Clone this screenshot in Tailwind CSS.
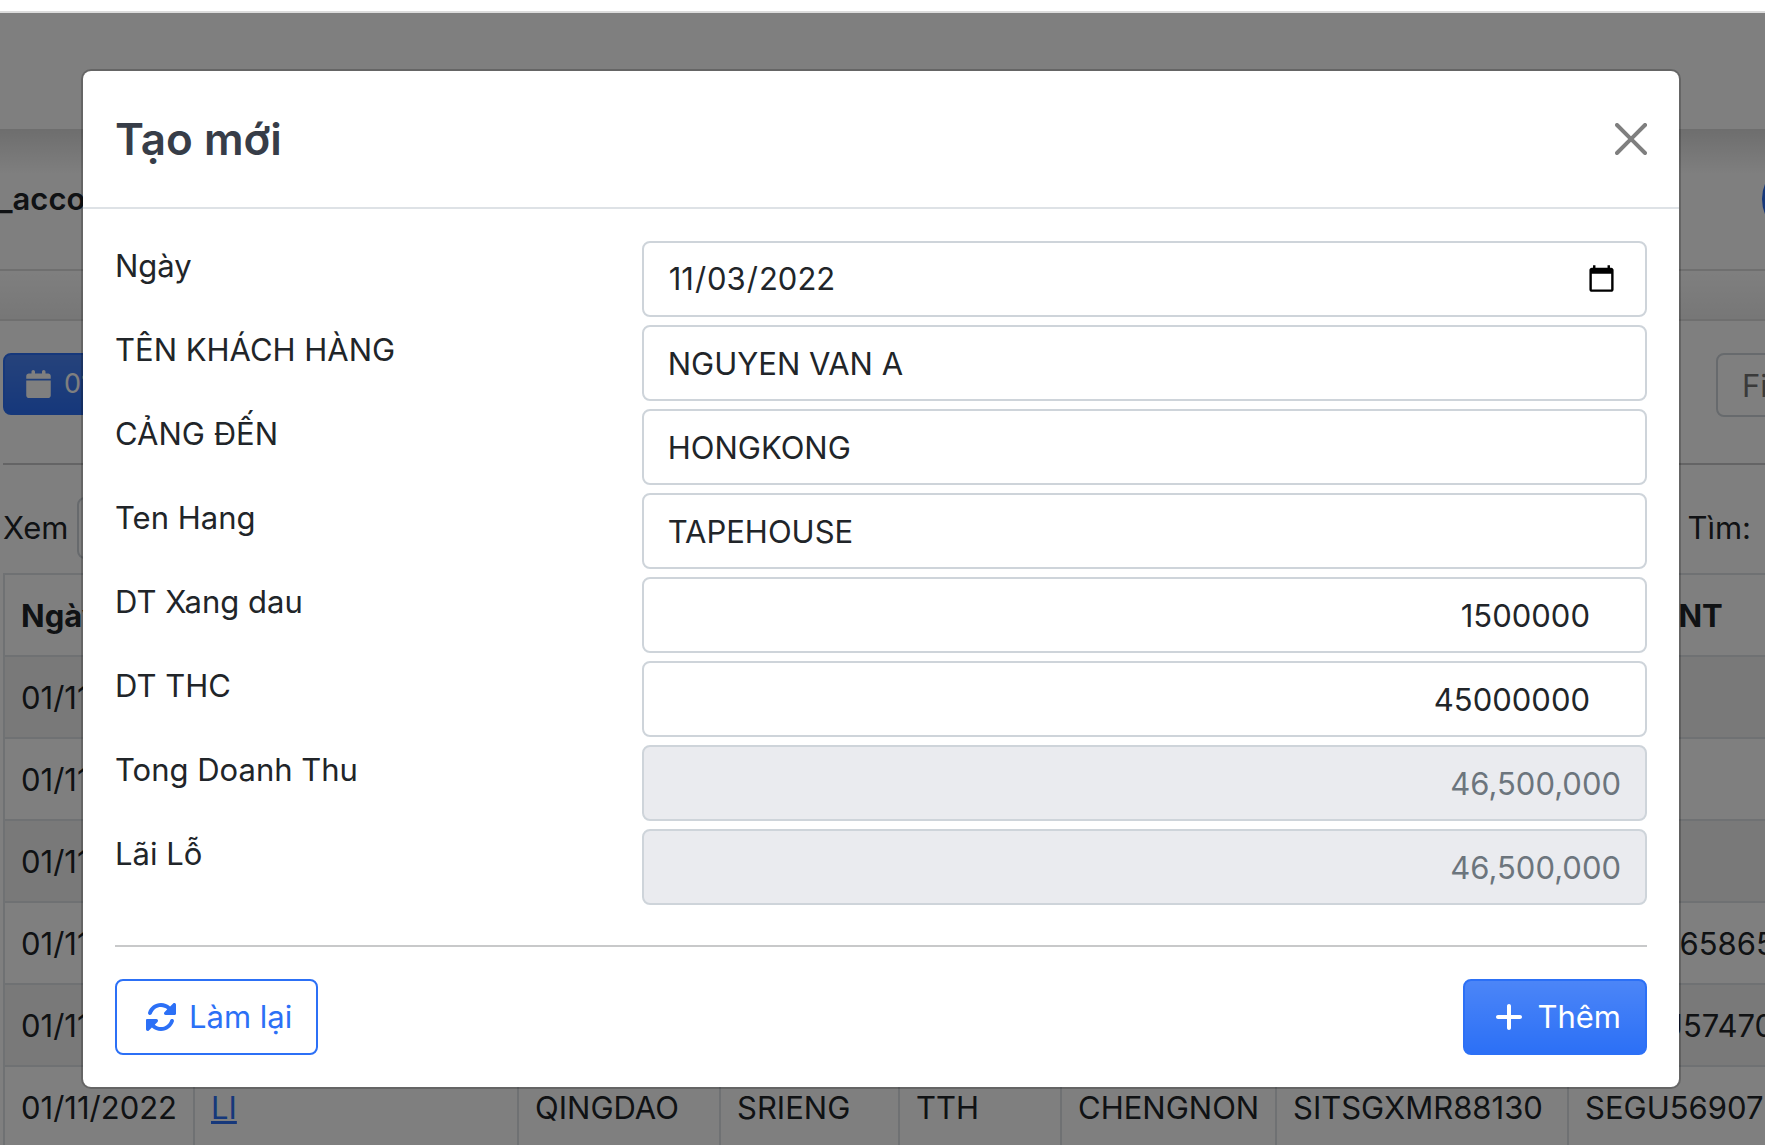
<!DOCTYPE html>
<html lang="vi">
<head>
<meta charset="utf-8">
<title>Tạo mới</title>
<script src="https://cdn.jsdelivr.net/npm/@tailwindcss/browser@4"></script>
</head>
<body class="relative h-screen overflow-hidden bg-white font-['Inter','Liberation_Sans',sans-serif] text-[31px] leading-[48px] text-[#212529]">

  <!-- Page behind the dialog -->
  <div class="h-[11px]"></div>
  <div class="h-[2px] bg-[#dcdcdc]"></div>
  <div class="h-[116px] bg-white"></div>

  <header class="flex h-[142px] items-center justify-between overflow-hidden border-b-2 border-[#dfdfdf] bg-linear-to-b from-[#dcdcdc] to-white to-[46px]">
    <div class="-ml-0.5 font-semibold">_account</div>
    <button class="-mr-[75px] size-[78px] shrink-0 rounded-full bg-[#2c70f6]" aria-label="Menu"></button>
  </header>
  <div class="h-12 bg-linear-to-b from-white to-[#eeeeee]"></div>

  <main class="w-full overflow-hidden border-t-2 border-[#dfdfdf] pl-[3px]">
    <div class="flex items-start justify-between pt-8">
      <button class="flex items-center rounded-lg border-2 border-[#2c70f6] bg-[#2c70f6] bg-linear-to-b from-white/15 to-white/0 px-4 py-2 text-[27px] leading-[42px] text-white">
        <svg class="mr-2 h-7 w-[35px]" viewBox="0 0 448 512" fill="currentColor"><path d="M96 32V64H48C21.500 64 0 85.500 0 112v48H448V112c0-26.500-21.500-48-48-48H352V32c0-17.700-14.300-32-32-32s-32 14.300-32 32V64H160V32c0-17.700-14.300-32-32-32S96 14.300 96 32zM448 192H0V464c0 26.500 21.500 48 48 48H400c26.500 0 48-21.500 48-48V192z"/></svg>
        01/11/2022
      </button>
      <input type="text" aria-label="Filter" placeholder="Filter" class="-mr-[200px] h-16 w-[249px] rounded-lg border-2 border-[#ced4da] px-6 placeholder:text-[#757575]">
    </div>
    <hr class="mt-[46px] border-t-2 border-[#c8c9ca]">
    <div class="flex items-center justify-between pt-8">
      <label class="flex items-center gap-2">Xem
        <select class="h-[62px] w-32 appearance-none rounded-lg border-2 border-[#ced4da] px-4"><option>50</option></select>
      </label>
      <label class="pr-[14px]">Tìm:</label>
    </div>
    <table class="mt-[14px] w-[2060px] table-fixed border-collapse [&_td]:border-2 [&_td]:border-[#dee2e6] [&_td]:px-4 [&_td]:pt-[17px] [&_td]:pb-[15px] [&_td]:whitespace-nowrap [&_th]:border-2 [&_th]:border-[#dee2e6] [&_th]:px-4 [&_th]:pt-[17px] [&_th]:pb-[15px] [&_th]:text-left [&_th]:font-bold [&_th]:whitespace-nowrap [&_tbody_tr:nth-child(odd)]:bg-[#f2f2f2]">
      <colgroup><col class="w-[190px]"><col class="w-[324px]"><col class="w-[202px]"><col class="w-[179px]"><col class="w-[162px]"><col class="w-[215px]"><col class="w-[292px]"><col></colgroup>
      <thead><tr><th>Ngày</th><th></th><th></th><th></th><th></th><th></th><th></th><th>Số CONT</th></tr></thead>
      <tbody>
        <tr><td>01/11/2022</td><td></td><td></td><td></td><td></td><td></td><td></td><td></td></tr>
        <tr><td>01/11/2022</td><td></td><td></td><td></td><td></td><td></td><td></td><td></td></tr>
        <tr><td>01/11/2022</td><td></td><td></td><td></td><td></td><td></td><td></td><td></td></tr>
        <tr><td>01/11/2022</td><td></td><td></td><td></td><td></td><td></td><td></td><td>CMAU65865</td></tr>
        <tr><td>01/11/2022</td><td></td><td></td><td></td><td></td><td></td><td></td><td>GMOU57470</td></tr>
        <tr><td>01/11/2022</td><td><a href="#" class="text-[#2c70f6] underline">LI</a></td><td>QINGDAO</td><td>SRIENG</td><td>TTH</td><td>CHENGNON</td><td>SITSGXMR88130</td><td>SEGU56907</td></tr>
      </tbody>
    </table>
  </main>

  <!-- Dialog -->
  <div class="absolute inset-x-0 top-[13px] bottom-0 bg-black/50 pt-14 pr-[84px] pl-[81px]">
    <section role="dialog" aria-labelledby="dialog-title" class="rounded-[10px] border-2 border-black/20 bg-white bg-clip-padding">
      <div class="flex items-center justify-between border-b-2 border-[#dee2e6] p-8">
        <h1 id="dialog-title" class="text-[44px] leading-[72px] font-semibold text-[#373d48]">Tạo mới</h1>
        <button aria-label="Đóng" class="text-black/50">
          <svg class="size-8" viewBox="0 0 16 16" fill="currentColor"><path d="M.293.293a1 1 0 0 1 1.414 0L8 6.586 14.293.293a1 1 0 1 1 1.414 1.414L9.414 8l6.293 6.293a1 1 0 0 1-1.414 1.414L8 9.414l-6.293 6.293a1 1 0 0 1-1.414-1.414L6.586 8 .293 1.707a1 1 0 0 1 0-1.414z"/></svg>
        </button>
      </div>
      <form class="p-8">
        <div class="grid grid-cols-3 gap-x-12 gap-y-2 [&_input]:col-span-2 [&_input]:h-[76px] [&_input]:w-full [&_input]:rounded-lg [&_input]:border-2 [&_input]:border-[#ced4da] [&_input]:px-6 [&_label]:pt-px">
          <label for="f1">Ngày</label>
          <input id="f1" type="date" value="2022-11-03" class="!pr-[26px]">
          <label for="f2">TÊN KHÁCH HÀNG</label>
          <input id="f2" type="text" value="NGUYEN VAN A">
          <label for="f3">CẢNG ĐẾN</label>
          <input id="f3" type="text" value="HONGKONG">
          <label for="f4">Ten Hang</label>
          <input id="f4" type="text" value="TAPEHOUSE">
          <label for="f5">DT Xang dau</label>
          <input id="f5" type="number" value="1500000" class="[appearance:textfield] !pr-10 text-right">
          <label for="f6">DT THC</label>
          <input id="f6" type="number" value="45000000" class="[appearance:textfield] !pr-10 text-right">
          <label for="f7">Tong Doanh Thu</label>
          <input id="f7" type="text" value="46,500,000" disabled class="bg-[#eaebef] text-right text-[#6c757d]">
          <label for="f8">Lãi Lỗ</label>
          <input id="f8" type="text" value="46,500,000" disabled class="bg-[#eaebef] text-right text-[#6c757d]">
        </div>
        <hr class="mt-10 mb-8 border-t-2 border-[#c8c9ca]">
        <div class="flex items-center justify-between">
          <button type="reset" class="flex items-center gap-2 rounded-lg border-2 border-[#2c70f6] px-6 py-3 text-[#2c70f6]">
            <svg class="h-8 w-10" viewBox="0 0 512 512" fill="currentColor"><path d="M449.900 39.960l-48.500 48.530C362.500 53.190 311.400 32 256 32C161.500 32 78.590 92.340 49.580 182.200c-5.438 16.810 3.797 34.880 20.610 40.280c16.970 5.500 34.860-3.812 40.300-20.590C130.900 138.500 189.400 96 256 96c37.960 0 73 14.180 100.200 37.800L311.100 178C295.100 194.800 306.800 223.400 330.400 224h146.900C487.700 223.700 496 215.300 496 204.900V59.040C496 34.990 466.900 22.950 449.900 39.960zM441.800 289.600c-16.940-5.438-34.880 3.812-40.300 20.590C381.100 373.500 322.600 416 256 416c-37.960 0-73-14.180-100.200-37.800L200 334C216.900 317.200 205.200 288.600 181.600 288H34.660C24.320 288.300 16 296.700 16 307.100v145.900c0 24.040 29.070 36.080 46.070 19.070l48.500-48.530C149.500 458.800 200.600 480 255.100 480c94.450 0 177.400-60.340 206.400-150.200C467.900 313 458.600 294.100 441.800 289.600z"/></svg>
            Làm lại
          </button>
          <button type="submit" class="flex items-center gap-2 rounded-lg border-2 border-[#2c70f6] bg-[#2c70f6] bg-linear-to-b from-white/15 to-white/0 px-6 py-3 text-white">
            <svg class="h-8 w-10" viewBox="0 0 448 512" fill="currentColor"><path d="M256 80c0-17.700-14.300-32-32-32s-32 14.300-32 32V224H48c-17.700 0-32 14.300-32 32s14.300 32 32 32H192V432c0 17.700 14.300 32 32 32s32-14.300 32-32V288H400c17.700 0 32-14.300 32-32s-14.300-32-32-32H256V80z"/></svg>
            Thêm
          </button>
        </div>
      </form>
    </section>
  </div>
</body>
</html>
